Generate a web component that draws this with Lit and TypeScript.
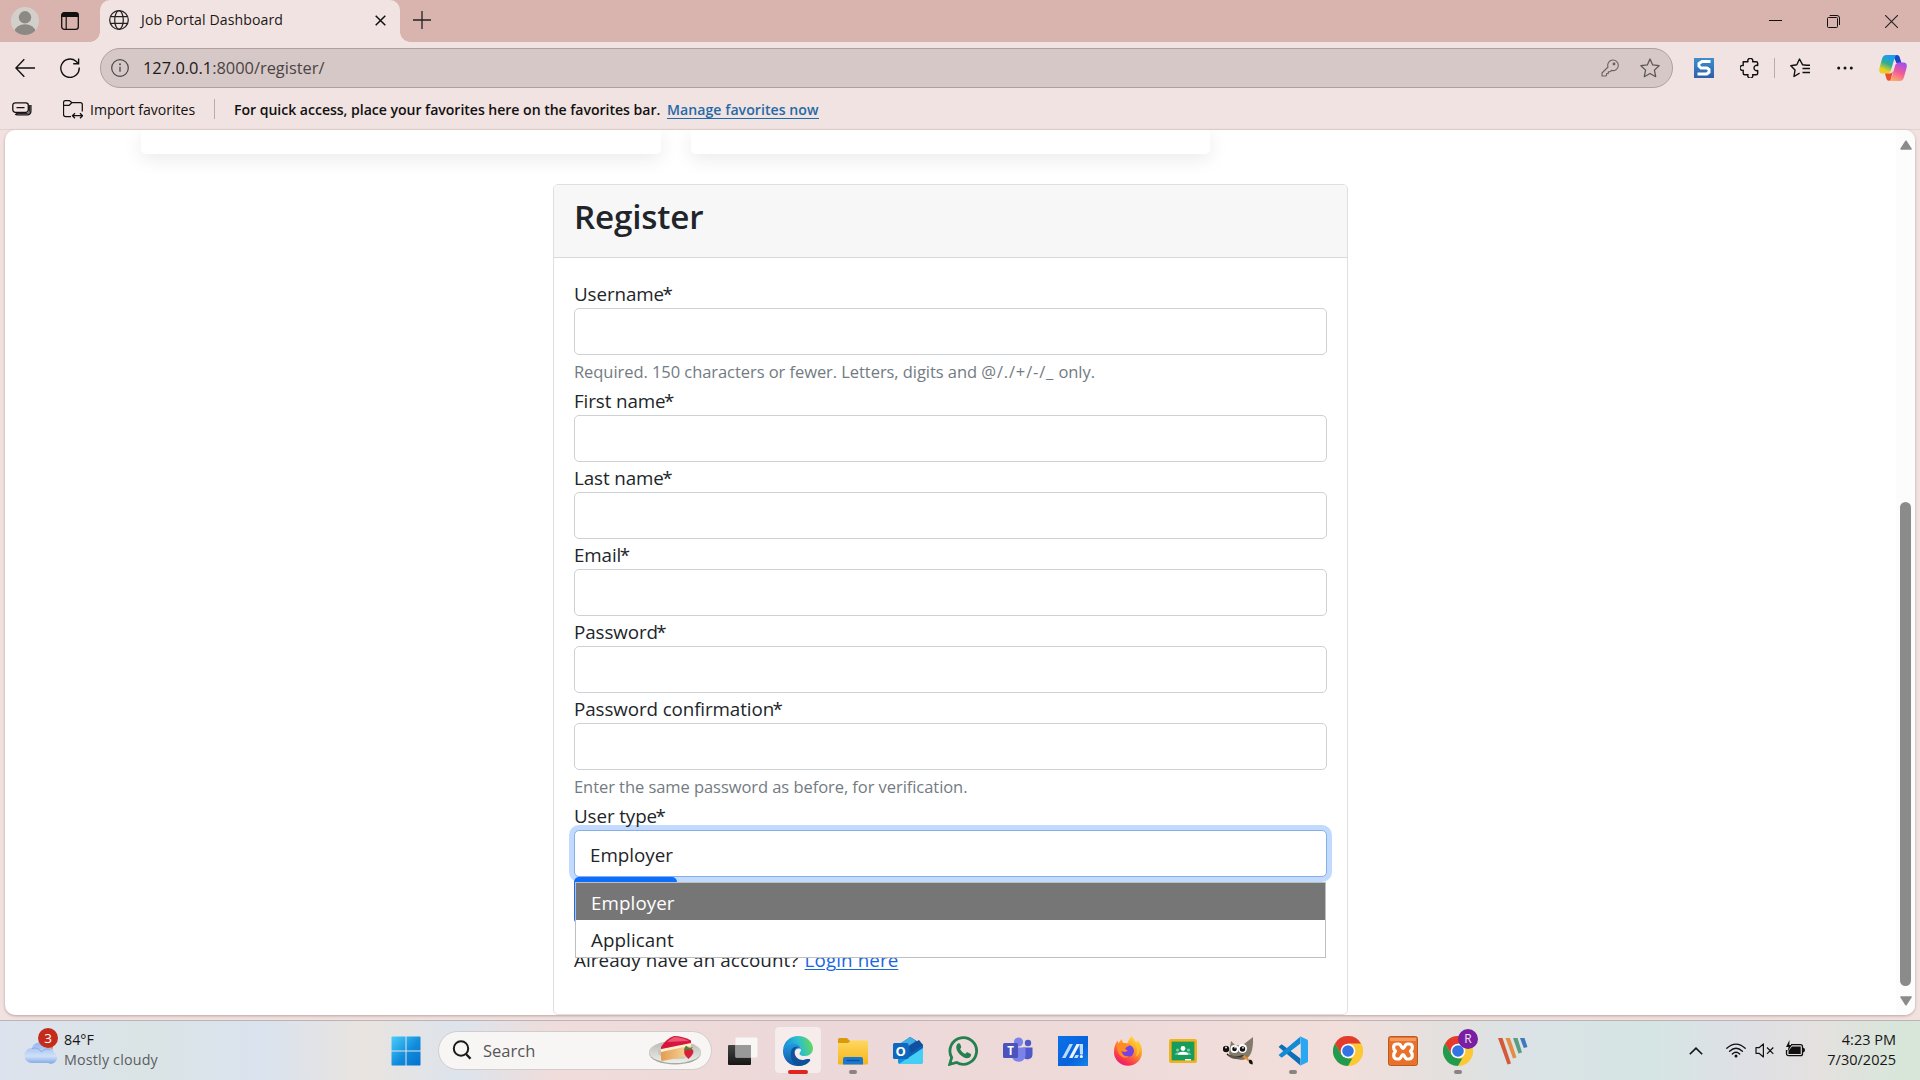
import { LitElement, html, css } from "lit";
import { customElement } from "lit/decorators.js";

const icons: Record<string, unknown> = {
  profile: html`<svg width="28" height="28" viewBox="0 0 28 28"><defs><clipPath id="pc"><circle cx="14" cy="14" r="14"/></clipPath></defs><circle cx="14" cy="14" r="14" fill="#d3d0cc"/><circle cx="14" cy="10.3" r="6.2" fill="#8c8985"/><ellipse cx="14" cy="24.5" rx="10.5" ry="7.2" fill="#8c8985" clip-path="url(#pc)"/></svg>`,
  tabs: html`<svg width="18" height="18" viewBox="0 0 18 18"><rect x=".7" y=".7" width="16.6" height="16.6" rx="2.6" fill="none" stroke="#111" stroke-width="1.3"/><path d="M.5 5V3A2.5 2.5 0 0 1 3 .5h12A2.5 2.5 0 0 1 17.5 3v2z" fill="#111"/><path d="M5.2 5v12" stroke="#111" stroke-width="1.2"/></svg>`,
  globe: html`<svg width="20" height="20" viewBox="0 0 20 20" fill="none" stroke="#222" stroke-width="1.250"><circle cx="10" cy="10" r="9.300"/><ellipse cx="10" cy="10" rx="4.300" ry="9.300"/><path d="M1.500 6.700h17M1.500 13.300h17"/></svg>`,
  x: html`<svg width="11" height="11" viewBox="0 0 11 11"><path d="M.7.7l9.600 9.600M10.300.7L.7 10.300" stroke="#111" stroke-width="1.500"/></svg>`,
  plus: html`<svg width="18" height="18" viewBox="0 0 18 18"><path d="M9 0v18M0 9h18" stroke="#222" stroke-width="1.300"/></svg>`,
  min: html`<svg width="13" height="13" viewBox="0 0 13 13"><path d="M0 5.500h13" stroke="#111" stroke-width="1"/></svg>`,
  restore: html`<svg width="13" height="13" viewBox="0 0 13 13" fill="none" stroke="#111"><rect x=".5" y="2.500" width="10" height="10" rx="1"/><path d="M2.700.5h7.300a2.500 2.500 0 0 1 2.500 2.500v7"/></svg>`,
  close: html`<svg width="13" height="13" viewBox="0 0 13 13"><path d="M0 0l13 13M13 0L0 13" stroke="#222" stroke-width="1.100"/></svg>`,
  back: html`<svg width="20" height="20" viewBox="0 0 20 20" fill="none" stroke="#111" stroke-width="1.400"><path d="M9.300 1.200L.9 10l8.400 8.800M1 10h19"/></svg>`,
  reload: html`<svg width="20" height="20" viewBox="0 0 20 20" fill="none" stroke="#111" stroke-width="1.400"><path d="M19.200 9.500A9.200 9.200 0 1 1 16 3.200L18.300 5.500M18.600.4v5.300h-5.400"/></svg>`,
  info: html`<svg width="18" height="18" viewBox="0 0 18 18"><circle cx="9" cy="9" r="8.300" fill="none" stroke="#4c4646" stroke-width="1.200"/><path d="M9 7.800v5" stroke="#4c4646" stroke-width="1.300"/><circle cx="9" cy="5.300" r=".95" fill="#4c4646"/></svg>`,
  key: html`<svg width="18" height="18" viewBox="0 0 18 18" fill="none" stroke="#6a6262" stroke-width="1.100"><path d="M1 17v-3L7 8a5.300 5.300 0 1 1 3.500 3.400L9 12.800H7.300v1.700H5.600v1.700L4.800 17z" stroke-linejoin="round"/><circle cx="13" cy="5" r=".9" fill="#6a6262"/></svg>`,
  star: html`<svg width="20" height="20" viewBox="0 0 20 20" fill="none" stroke="#5c5454" stroke-width="1.250" stroke-linejoin="round"><path d="M10 1l2.700 5.900 6.400.8-4.700 4.400 1.300 6.600L10 15.500l-5.700 3.200 1.300-6.600L.9 7.700l6.400-.8z"/></svg>`,
  snag: html`<svg width="20" height="20" viewBox="0 0 20 20"><defs><linearGradient id="sg" x2="0" y2="1"><stop stop-color="#3d8fce"/><stop offset="1" stop-color="#2c5fa8"/></linearGradient></defs><rect width="20" height="20" fill="url(#sg)"/><path d="M16.500 3.500H8L5 5.500v2.700L7 10h6l2 1.500v2.700l-2.200 1.800H3.500" fill="none" stroke="#fff" stroke-width="3"/></svg>`,
  puzzle: html`<svg width="20" height="20" viewBox="0 0 20 20" fill="none" stroke="#111" stroke-width="1.400" stroke-linejoin="round"><path d="M3.200 3.700H8a2.500 2.500 0 1 1 4.600 0h3.600a1.500 1.500 0 0 1 1.500 1.500v2.300a2.700 2.700 0 1 0 0 5v2.700a1.500 1.500 0 0 1-1.500 1.500h-3.600a2.500 2.500 0 1 1-4.600 0H4.700a1.500 1.500 0 0 1-1.500-1.500v-2.900a2.500 2.500 0 1 1 0-4.800z"/></svg>`,
  favs: html`<svg width="20" height="20" viewBox="0 0 20 20" fill="none" stroke="#111" stroke-width="1.400" stroke-linejoin="round"><path d="M16.500 7.300l-4-.6L9.500 1 6.800 6.700.8 7.800 5 12.100l-1 6.400 5.600-3.300M12.500 10.500H20M12.500 14.500H20M15 7.300h5"/></svg>`,
  dots: html`<svg width="16" height="4" viewBox="0 0 16 4" fill="#111"><circle cx="1.700" cy="2" r="1.500"/><circle cx="8" cy="2" r="1.500"/><circle cx="14.300" cy="2" r="1.500"/></svg>`,
  copilot: html`<svg width="28" height="26" viewBox="0 0 28 26"><defs><linearGradient id="c1" x1=".6" y1="0" x2=".2" y2="1"><stop offset=".1" stop-color="#1c9cf0"/><stop offset=".45" stop-color="#2fae8f"/><stop offset=".8" stop-color="#e9d022"/></linearGradient><linearGradient id="c2" x1=".7" y1="0" x2=".3" y2="1"><stop stop-color="#a24df0"/><stop offset=".5" stop-color="#ef5a9a"/><stop offset="1" stop-color="#ffab6a"/></linearGradient></defs><path d="M14 0h4c2.500 0 3 3 3.600 5l.8 3h-5z" fill="#1a45c8"/><path d="M7.500 0H18c-1.500.5-2.100 2-2.800 4.300L12 15c-.9 3-2.200 3.600-5 3.600H3.500C0 18.600-.3 15.500.6 12.400L3 4C3.900 1 5 0 7.500 0z" fill="url(#c1)"/><path d="M6 18.600h4.500c2 0 3-1 3.600-3l-2.600 10.200H10c-2 0-2.500-1.700-3-3.500z" fill="#e8502c"/><path d="M20.500 26H10c1.500-.5 2.100-2 2.800-4.300L16 11c.9-3 2.200-3.600 5-3.600h3.500c3.500 0 3.800 3.100 2.900 6.200L25 22c-.9 3-2 4-4.500 4z" fill="url(#c2)"/></svg>`,
  side: html`<svg width="20" height="14" viewBox="0 0 20 14" fill="none" stroke="#111" stroke-width="1.300"><rect x=".8" y=".8" width="15.500" height="9.500" rx="2.500"/><path d="M4.500 5.600h8M18.900 3V9q0 3.800-3.800 3.800H5.500q-1.500 0-2.300-.8"/><path d="M17.500 3v6.500q0 2-2.200 2H4" stroke-width=".9"/></svg>`,
  folder: html`<svg width="20" height="19" viewBox="0 0 20 19" fill="none" stroke="#111" stroke-width="1.250" stroke-linejoin="round"><path d="M8 16.500H2.500a2 2 0 0 1-2-2v-12A2 2 0 0 1 2.500.6h3.700l2.600 2h8.500a2 2 0 0 1 2 2v7M.6 5.300h5.600l2.600-2.500"/><path d="M9.500 15.700h10M12 13.200l-2.600 2.500 2.600 2.500M17 13.200l2.600 2.500-2.600 2.500"/></svg>`,
  chevron: html`<svg width="14" height="8" viewBox="0 0 14 8"><path d="M.8 7.200L7 1.200l6.200 6" fill="none" stroke="#111" stroke-width="1.600"/></svg>`,
  wifi: html`<svg width="20" height="15" viewBox="0 0 20 15" fill="none" stroke="#111" stroke-width="1.300" stroke-linecap="round"><path d="M.8 5.200Q10-3 19.200 5.200M3.600 8.200q6.400-5.800 12.800 0M6.300 11q3.700-3.400 7.400 0"/><circle cx="10" cy="13" r="1.500" fill="#111" stroke="none"/></svg>`,
  mute: html`<svg width="20" height="15" viewBox="0 0 20 15" fill="none" stroke="#111" stroke-width="1.200" stroke-linejoin="round"><path d="M1 4.700h3L8.400 1v13L4 10.300H1zM12 4.500l6.300 6.300M18.300 4.500L12 10.800"/></svg>`,
  battery: html`<svg width="21" height="17" viewBox="0 0 21 17"><path d="M6 4.700h9.500a2 2 0 0 1 2 2v7a2 2 0 0 1-2 2h-12a2 2 0 0 1-2-2V10" fill="none" stroke="#111" stroke-width="1.300"/><path d="M7 6.500h8.700V14H3.500v-3.200z" fill="#111"/><path d="M18 7.800q2 0 2 2.300t-2 2.300z" fill="#111"/><path d="M4.500 0L1 7h2.600L2.500 11.500 7 5H4.300z" fill="#111"/></svg>`,
  lens: html`<svg width="20" height="20" viewBox="0 0 20 20" fill="none" stroke="#1a1a1a" stroke-width="2"><circle cx="9" cy="8.500" r="7.200"/><path d="M14 14l4.500 4.800" stroke-width="2.400"/></svg>`,
  weather: html`<svg width="36" height="38" viewBox="0 0 36 38"><defs><linearGradient id="cl" x2="0" y2="1"><stop stop-color="#93b5ec"/><stop offset=".65" stop-color="#cfe0f8"/><stop offset="1" stop-color="#7fa6e3"/></linearGradient></defs><circle cx="24" cy="20" r="5" fill="#f0852a"/><path d="M8 36a7.500 7.500 0 0 1-.3-15A8.500 8.500 0 0 1 23.500 20.500 6.500 6.500 0 0 1 30 25.500 6 6 0 0 1 24 36z" fill="url(#cl)"/><path d="M8 21.500q6-2 9.500 3.500 4-4.500 9-2.500" fill="none" stroke="#86aae6" stroke-width="1"/><circle cx="24" cy="11" r="10" fill="#c42b1c"/><text x="24" y="16" text-anchor="middle" font-size="13.500" fill="#fff">3</text></svg>`,
  start: html`<svg width="30" height="30" viewBox="0 0 30 30"><defs><linearGradient id="wn" x2="1" y2="1" gradientUnits="userSpaceOnUse" gradientTransform="scale(30)"><stop stop-color="#4bd0fb"/><stop offset=".55" stop-color="#118cdc"/><stop offset="1" stop-color="#0470cf"/></linearGradient></defs><path d="M1 .5h13.500V14.500H.5V1zM15.500.5H29l.5.5v13.500h-14zM.5 15.500h14v14H1L.5 29zM15.500 15.500h14V29l-.5.5H15.500z" fill="url(#wn)"/></svg>`,
  cake: html`<svg width="54" height="30" viewBox="0 0 54 30"><defs><linearGradient id="pl" x2="0" y2="1"><stop stop-color="#b9b9b4"/><stop offset="1" stop-color="#eeeeea"/></linearGradient><linearGradient id="ck" x2="1" y2="0"><stop stop-color="#e39c53"/><stop offset="1" stop-color="#f8dda2"/></linearGradient></defs><ellipse cx="27" cy="18" rx="26" ry="11.500" fill="#a9a9a2"/><ellipse cx="27" cy="17" rx="26" ry="11" fill="url(#pl)"/><ellipse cx="28" cy="17" rx="18" ry="7" fill="#c7c7c1"/><path d="M13 13l30-6v13.500L14 26q-1-.5-1-2z" fill="url(#ck)"/><path d="M13 14l30-6v2.500L13 17z" fill="#fff0cf"/><path d="M13 12Q19 3 26 1q9 0 17 4.500V8L13 14z" fill="#d5163e"/><path d="M19 7Q25 2 27 2q8 .5 14 4z" fill="#ee5673"/><path d="M37 14q3-3 7 0 4 3-3.500 10Q34 18 37 14z" fill="#d8203b"/><path d="M38 10.500l3 2.500 4-1-2.500 3-3-.5-4 .5z" fill="#458839"/></svg>`,
  taskview: html`<svg width="30" height="30" viewBox="0 0 30 30"><defs><linearGradient id="tv" x2="0" y2="1"><stop stop-color="#444"/><stop offset="1" stop-color="#161616"/></linearGradient></defs><rect x="0" y="9" width="23" height="20" rx="1" fill="url(#tv)"/><rect x="7.500" y="1.500" width="22" height="20" rx="1" fill="#fafafa" opacity=".85"/><path d="M7.500 9H23v12.500H7.500z" fill="#999"/></svg>`,
  edge: html`<svg width="30" height="30" viewBox="0 0 30 30"><defs><linearGradient id="e1" x1="0" y1=".5" x2="1" y2=".3"><stop stop-color="#1789d5"/><stop offset=".5" stop-color="#29bcd5"/><stop offset="1" stop-color="#68dc50"/></linearGradient><linearGradient id="e2" x2="0" y2="1"><stop stop-color="#229ce2"/><stop offset="1" stop-color="#0d54a6"/></linearGradient></defs><path d="M0 14C1 5 7.500 0 15 0c9 0 15 6.500 15 12.500 0 4.500-3.500 7.500-8 7.500-4 0-5.500-1.300-5.500-2.600 0-1 1.500-1.500 1.500-3.900C18 10.500 14 7.500 9.500 7.500 4.500 7.500 1 11 0 14z" fill="url(#e1)"/><path d="M0 14c1-4 4.500-7 9.300-7 5 0 8.700 3.300 8.700 6.500-1-1.700-6-1.700-6.500 3-.5 5.500 4.500 9.500 11.500 7 2.500-.9 5 0 4 1.200C24.500 28 20 30 15 30 6 30-.5 23 0 14z" fill="url(#e2)"/><path d="M8 15.500c.5-3.500 4-5.500 8-4.300-3 0-4.700 2-4.500 5.300.4 5 5.500 9.200 12 6.800 2-.7 4.400 0 3.500 1.300-3 4-7.500 5.500-12 5.400C9 28 7 21 8 15.500z" fill="#0f5199"/></svg>`,
  explorer: html`<svg width="30" height="28" viewBox="0 0 30 28"><defs><linearGradient id="fx" x2="0" y2="1"><stop stop-color="#ffd75e"/><stop offset="1" stop-color="#f5b51b"/></linearGradient></defs><path d="M0 2.500Q0 1 1.500 1H9l3 3h17v5H0z" fill="#d99a0c"/><path d="M0 6h10l3-2.500h15.500q1.500 0 1.500 1.500v21q0 1.500-1.500 1.500h-27Q0 27.500 0 26z" fill="url(#fx)"/><path d="M5 27.500V22q0-2 2-2h16q2 0 2 2v5.500z" fill="#1b78d0"/><path d="M8.500 23.500h13" stroke="#0b4f9c" stroke-width="1.300"/></svg>`,
  outlook: html`<svg width="30" height="27" viewBox="0 0 30 27"><path d="M5 8l12-8 13 8v16q0 3-3 3H7q-2 0-2-2z" fill="#1491dc"/><path d="M17 0l13 8v6L14 24 8 12z" fill="#0d61b9"/><path d="M17 0L5 8v8l18-12z" fill="#42aee5"/><path d="M30 11v13q0 3-3 3H6z" fill="#45cff5"/><path d="M16 9l10-6 4 5-12 8z" fill="#12509d"/><rect y="6" width="15.500" height="16" rx="1.500" fill="#0f68bd"/><text x="7.700" y="18.500" text-anchor="middle" font-size="13" font-weight="700" fill="#fff">O</text></svg>`,
  whatsapp: html`<svg width="30" height="30" viewBox="0 0 30 30"><path d="M1.700 28.300l2-6.800A13.300 13.300 0 1 1 8.700 26.500z" fill="none" stroke="#24804f" stroke-width="2.800"/><path d="M9 8.500c1-1.700 2.600-1.700 3.200-.4l1 2.600c.3 1-1.200 1.900-1 2.600 1.200 2.300 2.600 3.600 4.700 4.500.8.200 1.500-1.900 2.500-1.600l3 1.500c1.500.8.200 3.300-1.200 4-3 1.500-7-.9-9.500-3.500C9.500 15.800 7 12 9 8.500z" fill="#24804f"/></svg>`,
  teams: html`<svg width="30" height="27" viewBox="0 0 30 27"><circle cx="15.500" cy="5" r="4.600" fill="#7b83eb"/><circle cx="25" cy="6" r="3.200" fill="#5059c9"/><path d="M20 10.500h9.500v7a5 5 0 0 1-9.500 2z" fill="#5059c9"/><path d="M9 10.500h13.500v8.500a7 7 0 0 1-13.500 1z" fill="#7b83eb"/><rect y="6" width="15" height="15" rx="1.500" fill="#4b53bc"/><text x="7.500" y="17.800" text-anchor="middle" font-size="11.500" font-weight="700" fill="#fff">T</text></svg>`,
  asus: html`<svg width="30" height="30" viewBox="0 0 30 30"><defs><linearGradient id="as" x2="1" y2="1"><stop stop-color="#0a72ea"/><stop offset=".6" stop-color="#0862dc"/><stop offset="1" stop-color="#1484e8"/></linearGradient></defs><path d="M0 0h30v30H0z" fill="url(#as)"/><path d="M4 22L11.500 8H15L7.500 22z" fill="#b9dcff"/><path d="M11 22l7.500-14H22L14.500 22z" fill="#e8f4ff"/><path d="M21.500 8H25v10.500h-3zM17.500 19h3.500l-1.500 3H16z" fill="#b9dcff"/><circle cx="23.400" cy="20.500" r="1.500" fill="#fff"/></svg>`,
  firefox: html`<svg width="30" height="30" viewBox="0 0 30 30"><defs><linearGradient id="ff" x1=".8" y1="0" x2=".2" y2="1"><stop stop-color="#ffe83c"/><stop offset=".4" stop-color="#ff9a2a"/><stop offset=".8" stop-color="#f9324e"/><stop offset="1" stop-color="#e31587"/></linearGradient></defs><path d="M18.500 0c2 2 3 3.500 3.600 5.500q1.200.8 1.800 1.500L24 4c4 3.500 5 8 5 12A14 13.700 0 0 1 1 16c0-4.500 1-8 3.500-11.500l1 2.700L8.500 3q.5 2 2 4h4C15.500 4 17 2 18.500 0z" fill="url(#ff)"/><circle cx="15" cy="15" r="6" fill="#7542e5"/><path d="M4 8c4-2.500 8-.5 9.500.5l4-.5c-1 2.500-4 2.500-5 4-.5 1.300 1 2.500 2.500 2.300-2 2.700-5.500 1.800-6.700 0-.5 4 4 7.300 8.500 5.500C11 25 3 19 4 8z" fill="#ff8b24"/><path d="M19 5c6 5 6.500 11 3.500 16 5-3 6-11-.5-15.500z" fill="#ffc52e"/></svg>`,
  classroom: html`<svg width="28" height="24" viewBox="0 0 28 24"><rect width="28" height="24" rx="2" fill="#f0b31d"/><path d="M2.600 2.600h22.800v18.800H2.600z" fill="#179c5b"/><circle cx="14" cy="9.500" r="2.400" fill="#fff"/><circle cx="8.500" cy="11" r="1.600" fill="#7fcaa5"/><circle cx="19.500" cy="11" r="1.600" fill="#7fcaa5"/><path d="M5.500 15.800q1-2.500 4-2.500h9q3 0 4 2.500z" fill="#7fcaa5"/><path d="M8.700 15.800q.7-3 5.300-3t5.300 3z" fill="#fff"/><path d="M16 20h6v1.500h-6z" fill="#fff"/></svg>`,
  gimp: html`<svg width="30" height="28" viewBox="0 0 30 28"><path d="M8 4l4 4q5 1 9-1l9-7q.5 12-3 18-3 5-9 5-8-1-12-6z" fill="#827a6c"/><circle cx="3" cy="12" r="3.200" fill="#111"/><circle cx="11.500" cy="12" r="4" fill="#fff"/><circle cx="19.500" cy="11.500" r="4.500" fill="#fff"/><circle cx="11.500" cy="12" r="2.300" fill="#111"/><circle cx="19.500" cy="12" r="2.700" fill="#111"/><circle cx="3" cy="10.500" r=".9" fill="#fff"/><circle cx="12" cy="10.800" r=".8" fill="#fff"/><circle cx="20" cy="10.800" r=".9" fill="#fff"/><path d="M4 17q5 5 17 1.500" fill="none" stroke="#111" stroke-width="1.200"/><path d="M4 18q7 7 16 2z" fill="#5f574b"/><path d="M21 18l6 5-1.500 1.500-6-5z" fill="#ef8d2a"/><path d="M26 23q4-1 3.700 4.500Q25 27 26 23z" fill="#111"/></svg>`,
  vscode: html`<svg width="30" height="30" viewBox="0 0 30 30"><path d="M1.300 10.200L3 8.800q.7-.5 1.400 0L22.500 22.500v7L.9 11.300q-.6-.600.4-1.100z" fill="#0d6fb8"/><path d="M1.300 19.800L3 21.200q.7.500 1.400 0L22.500 7.500v-7L.9 18.700q-.6.600.4 1.100z" fill="#128bd6"/><path d="M21.500 0L29 3.500q1 .5 1 1.500v20q0 1-1 1.500L21.500 30q1.300-.5 1.300-2V2q0-1.500-1.300-2z" fill="#2aa7f2"/></svg>`,
  chrome: html`<svg width="30" height="30" viewBox="0 0 30 30"><circle cx="15" cy="15" r="15" fill="#fcc934"/><path d="M2 7.500A15 15 0 0 1 28 7.500H15L8.500 18.800z" fill="#e33b2e"/><path d="M2 7.500L8.500 18.800 15 22.500h6.500L15 30A15 15 0 0 1 2 7.500z" fill="#229a4f"/><path d="M15 30l6.500-11.200V15H28.500L28 7.500A15 15 0 0 1 15 30z" fill="#fcc934"/><circle cx="15" cy="15" r="7.300" fill="#fff"/><circle cx="15" cy="15" r="5.800" fill="#3374e3"/></svg>`,
  xampp: html`<svg width="30" height="30" viewBox="0 0 30 30"><rect x=".5" y=".5" width="29" height="29" rx="2" fill="#e9712c" stroke="#b95a22"/><path d="M2 2h26v3H2z" fill="#f29a60"/><path d="M15 12.300c-1.800 0-1.500-4.300-4.500-4.300H9c-4.500 0-4 5-1.500 7.200C5 17.500 4.800 23 9 23h1.500c3 0 2.700-4.500 4.500-4.500s1.500 4.500 4.500 4.500H21c4.200 0 4-5.500 1.500-7.800C25 13 25.500 8 21 8h-1.500c-3 0-2.700 4.300-4.500 4.300z" fill="none" stroke="#fff" stroke-width="3.200" stroke-linejoin="round"/></svg>`,
  stripes: html`<svg width="30" height="28" viewBox="0 0 30 28"><path d="M0 1h4.500L13 26.500 9.500 27.500z" fill="#d4593a"/><path d="M7.500 1H12l6.500 19.500-3.500 1z" fill="#e58d43"/><path d="M15 1h4.500L24 15.500l-3.500 1z" fill="#5c9c80"/><path d="M22 1h4.500l3 9-3.700 1z" fill="#3d79bd"/></svg>`,
};

const taskApps = [
  { icon: "taskview" }, { icon: "edge", active: true }, { icon: "explorer", running: true },
  { icon: "outlook" }, { icon: "whatsapp" }, { icon: "teams" }, { icon: "asus" },
  { icon: "firefox" }, { icon: "classroom" }, { icon: "gimp" }, { icon: "vscode", running: true },
  { icon: "chrome" }, { icon: "xampp" }, { icon: "chrome", running: true, badge: "R" }, { icon: "stripes" },
] as { icon: string; active?: boolean; running?: boolean; badge?: string }[];

const fields = [
  { label: "Username", help: html`Required. 150 characters or fewer. Letters, digits and <span class="sym">@/./+/-/_</span> only.` },
  { label: "First name" }, { label: "Last name" }, { label: "Email" }, { label: "Password" },
  { label: "Password confirmation", help: "Enter the same password as before, for verification." },
] as { label: string; help?: unknown }[];

const base = css`
  :host { display: block; font-family: "Open Sans", "Noto Sans", sans-serif; }
  * { box-sizing: border-box; }
  svg { display: block; flex: none; }
  svg text { font-family: "Open Sans", sans-serif; }
`;

@customElement("browser-chrome")
class BrowserChrome extends LitElement {
  static styles = [base, css`
    .tabbar { display: flex; align-items: center; height: 42px; background: #d9b3ad; padding: 0 0 1px 11px; }
    .tabs-ic { margin-left: 22px; }
    .tab { position: relative; display: flex; align-items: center; width: 300px; height: 42px; margin: 0 0 -1px 21px; padding: 0 14px 2px 9px; background: #f1e3e1; border-radius: 10px 10px 0 0; font-size: 14.1px; color: #1b1717; }
    .tab::before, .tab::after { content: ""; position: absolute; bottom: 0; width: 10px; height: 10px; }
    .tab::before { left: -10px; background: radial-gradient(circle at 0 0, transparent 9.5px, #f1e3e1 10px); }
    .tab::after { right: -10px; background: radial-gradient(circle at 100% 0, transparent 9.5px, #f1e3e1 10px); }
    .title { margin: -2px 0 0 12px; flex: 1; letter-spacing: 0.1px; }
    .plus { margin: 0 0 2px 13px; }
    .win { margin-left: auto; display: flex; gap: 45px; padding: 1px 22px 0 0; }
    .tools { display: flex; align-items: center; height: 51px; background: #f1e3e1; padding: 0 0 0 15px; }
    .reload { margin-left: 25px; }
    .omni { display: flex; align-items: center; width: 1573px; height: 40px; margin-left: 20px; padding: 0 12px 0 10px; background: #d6c8c6; border: 1px solid #ada09f; border-radius: 20px; }
    .url { flex: 1; margin: -1px 0 0 14px; font-size: 16.4px; color: #4a4444; }
    .url b { font-weight: 400; color: #1d1919; }
    .key { margin-right: 21px; }
    .snag { margin-left: 21px; } .puz { margin-left: 26px; }
    .sep { width: 1px; height: 20px; background: #b8abaa; }
    .tools .sep { margin: 0 15px 0 14px; }
    .dots { margin: 0 26px 0 27px; }
    .bar { display: flex; align-items: center; height: 37px; background: #f1e3e1; padding: 0 0 4px 12px; font-size: 14.1px; color: #111; border-bottom: 1px solid #e3d2d0; }
    .fold { margin-left: 31px; } .imp { margin-left: 7px; width: 124px; letter-spacing: -0.03px; }
    .strong { font-weight: 600; margin-left: 19px; width: 433px; white-space: nowrap; letter-spacing: -0.04px; }
    .link { font-weight: 600; color: #1f6aa8; border-bottom: 1px solid #1f6aa8; line-height: 17px; margin-top: 2px; white-space: nowrap; letter-spacing: 0.05px; }
  `];
  render() {
    return html`
      <div class="tabbar">
        ${icons.profile}<div class="tabs-ic">${icons.tabs}</div>
        <div class="tab">${icons.globe}<span class="title">Job Portal Dashboard</span>${icons.x}</div>
        <div class="plus">${icons.plus}</div>
        <div class="win">${icons.min}${icons.restore}${icons.close}</div>
      </div>
      <div class="tools">
        ${icons.back}<div class="reload">${icons.reload}</div>
        <div class="omni">${icons.info}<span class="url"><b>127.0.0.1</b>:8000/register/</span><div class="key">${icons.key}</div>${icons.star}</div>
        <div class="snag">${icons.snag}</div><div class="puz">${icons.puzzle}</div>
        <div class="sep"></div>${icons.favs}<div class="dots">${icons.dots}</div>${icons.copilot}
      </div>
      <div class="bar">
        ${icons.side}<div class="fold">${icons.folder}</div><span class="imp">Import favorites</span>
        <div class="sep"></div>
        <span class="strong">For quick access, place your favorites here on the favorites bar.</span>
        <span class="link">Manage favorites now</span>
      </div>`;
  }
}

@customElement("register-page")
class RegisterPage extends LitElement {
  static styles = [base, css`
    .frame { display: flex; height: 885px; margin: 0 5px; background: #fff; border-radius: 10px; overflow: hidden; box-shadow: 0 1px 3px rgba(90,50,45,.35); }
    .page { width: 1891px; color: #212529; font-size: 18.8px; }
    .cards { display: flex; gap: 30px; margin-left: 136px; }
    .stub { width: 519.5px; height: 24px; border-radius: 0 0 5px 5px; background: #fff; box-shadow: 0 5px 19px rgba(0,0,0,.085); }
    .card { width: 795px; height: 831px; margin: 30px 0 0 548px; border: 1px solid #dedfe0; border-radius: 5px; background: #fff; }
    .head { height: 73px; padding: 11px 20px 0; background: #f7f7f7; border-bottom: 1px solid #d8d9da; border-radius: 4px 4px 0 0; }
    h3 { margin: 0; font-size: 33.2px; font-weight: 600; line-height: 42px; letter-spacing: -0.15px; }
    .body { padding: 20px 20px; }
    label { display: block; position: relative; z-index: 1; height: 30px; line-height: 32px; letter-spacing: -0.1px; }
    label span { letter-spacing: 0; margin-left: -1.5px; }
    .input { height: 47px; border: 1px solid #ced1d4; border-radius: 5px; background: #fff; }
    .help { height: 30px; line-height: 33px; font-size: 16.5px; color: #737b82; white-space: nowrap; letter-spacing: -0.06px; }
    .sym { letter-spacing: 0.85px; }
    .select { position: relative; padding: 0 15px; line-height: 49px; border-color: #86aee8; box-shadow: 0 0 0 5px #c2dafd; }
    .menu { position: absolute; z-index: 2; left: 0; right: 0; top: 51px; height: 76px; background: #fff; border: 1px solid #bfbfbf; line-height: 40px; letter-spacing: 0.08px; }
    .opt { height: 37px; padding-left: 15px; }
    .opt.on { background: #767676; color: #fff; }
    .btn { position: relative; width: 103px; height: 47px; margin-bottom: 20px; background: #0d6efd; border-radius: 5px; }
    .login { height: 30px; line-height: 32px; letter-spacing: 0.1px; }
    .login a { color: #1a65e0; text-decoration: underline; text-decoration-thickness: 1px; text-underline-offset: 2px; margin-left: 1px; }
    .scroll { flex: 1; display: flex; flex-direction: column; align-items: center; background: #fcfcfc; padding: 10px 0 9px; }
    .thumb { width: 11px; height: 484px; margin: auto 0 10px; border-radius: 6px; background: #8b8b8b; }
  `];
  render() {
    return html`<div class="frame">
      <div class="page">
        <div class="cards"><div class="stub"></div><div class="stub"></div></div>
        <div class="card">
          <div class="head"><h3>Register</h3></div>
          <div class="body">
            ${fields.map(f => html`<label>${f.label}<span>*</span></label><div class="input"></div>${f.help ? html`<div class="help">${f.help}</div>` : ""}`)}
            <label>User type<span>*</span></label>
            <div class="input select">Employer
              <div class="menu"><div class="opt on">Employer</div><div class="opt">Applicant</div></div>
            </div>
            <div class="btn"></div>
            <div class="login">Already have an account? <a>Login here</a></div>
          </div>
        </div>
      </div>
      <div class="scroll">
        <svg width="12" height="10" viewBox="0 0 12 10"><path d="M6 1.200L11 9H1z" fill="#8b8b8b" stroke="#8b8b8b" stroke-width="1.500" stroke-linejoin="round"/></svg>
        <div class="thumb"></div>
        <svg width="12" height="10" viewBox="0 0 12 10"><path d="M6 8.800L11 1H1z" fill="#8b8b8b" stroke="#8b8b8b" stroke-width="1.500" stroke-linejoin="round"/></svg>
      </div>
    </div>`;
  }
}

@customElement("task-bar")
class TaskBar extends LitElement {
  static styles = [base, css`
    .bar { display: flex; align-items: center; height: 60px; padding-left: 24px; border-top: 1px solid #b9b4b7;
      background: linear-gradient(90deg, #dde3ee 0, #dae4e5 140px, #dae3ee 260px, #e9e4e0 365px, #dde4ec 460px, #f0dcda 560px, #ecd8d8 800px, #eedad9 1100px, #f2dfdb 1340px, #e4e0de 1440px, #dbe3e6 1530px, #d5e5e3 1650px, #dee0e6 1740px, #e4e1df 1820px, #d8e6da 1900px); }
    .weather { display: flex; width: 367px; align-items: center; }
    .wt { margin: 0 0 2px 4px; font-size: 14.3px; line-height: 20px; color: #161616; }
    .wt div + div { color: #5b5e62; letter-spacing: 0.18px; }
    .weather svg { margin: 0 0 9px; }
    .search { display: flex; align-items: center; width: 274px; height: 39px; margin: 0 0 1px 17px; padding: 0 9px 0 13px; background: #f8f5f5; border: 1px solid #d2cccd; border-radius: 20px; font-size: 16.5px; color: #565656; }
    .search span { flex: 1; margin: 0 0 0 11px; }
    .apps { display: flex; margin-left: 3px; }
    .cell { position: relative; width: 55px; height: 59px; display: flex; align-items: center; justify-content: center; }
    .cell.active::before { content: ""; position: absolute; inset: 5px 3.5px 6px; border-radius: 5px; background: #f6ecec; border: 1px solid #e6dada; }
    .cell svg { position: relative; }
    .cell i { position: absolute; bottom: 6px; width: 8px; height: 4px; border-radius: 2px; background: #8a8384; }
    .cell.active i { width: 20px; background: #e02420; }
    .badge { position: absolute; left: 28px; top: 8px; width: 20px; height: 20px; border-radius: 50%; background: #7b1fa2; color: #f0e0f5; font-size: 12px; line-height: 20px; text-align: center; }
    .tray { display: flex; align-items: center; margin-left: auto; padding-right: 24px; }
    .chev { margin-right: 23px; } .wifi { margin-right: 9px; } .mute { margin-right: 10px; }
    .bat { margin: 0 0 4px; }
    .clock { width: 79px; margin: 0 0 2px 11px; font-size: 14.5px; line-height: 20px; color: #161616; white-space: nowrap; display: flex; flex-direction: column; align-items: flex-end; }
  `];
  render() {
    return html`<div class="bar">
      <div class="weather">${icons.weather}<div class="wt"><div>84°F</div><div>Mostly cloudy</div></div></div>
      ${icons.start}
      <div class="search">${icons.lens}<span>Search</span>${icons.cake}</div>
      <div class="apps">${taskApps.map(a => html`<div class="cell ${a.active ? "active" : ""}">${icons[a.icon]}${a.badge ? html`<div class="badge">${a.badge}</div>` : ""}${a.active || a.running ? html`<i></i>` : ""}</div>`)}</div>
      <div class="tray"><div class="chev">${icons.chevron}</div><div class="wifi">${icons.wifi}</div><div class="mute">${icons.mute}</div><div class="bat">${icons.battery}</div>
        <div class="clock"><div>4:23 PM</div><div>7/30/2025</div></div></div>
    </div>`;
  }
}

@customElement("app-root")
class AppRoot extends LitElement {
  static styles = css`
    :host { display: block; width: 1920px; height: 1080px; overflow: hidden; background: #f1e1df; }
    .screen { display: flex; flex-direction: column; height: 1080px; }
    .task { margin-top: auto; }
  `;
  render() {
    return html`<div class="screen"><browser-chrome></browser-chrome><register-page></register-page><task-bar class="task"></task-bar></div>`;
  }
}
